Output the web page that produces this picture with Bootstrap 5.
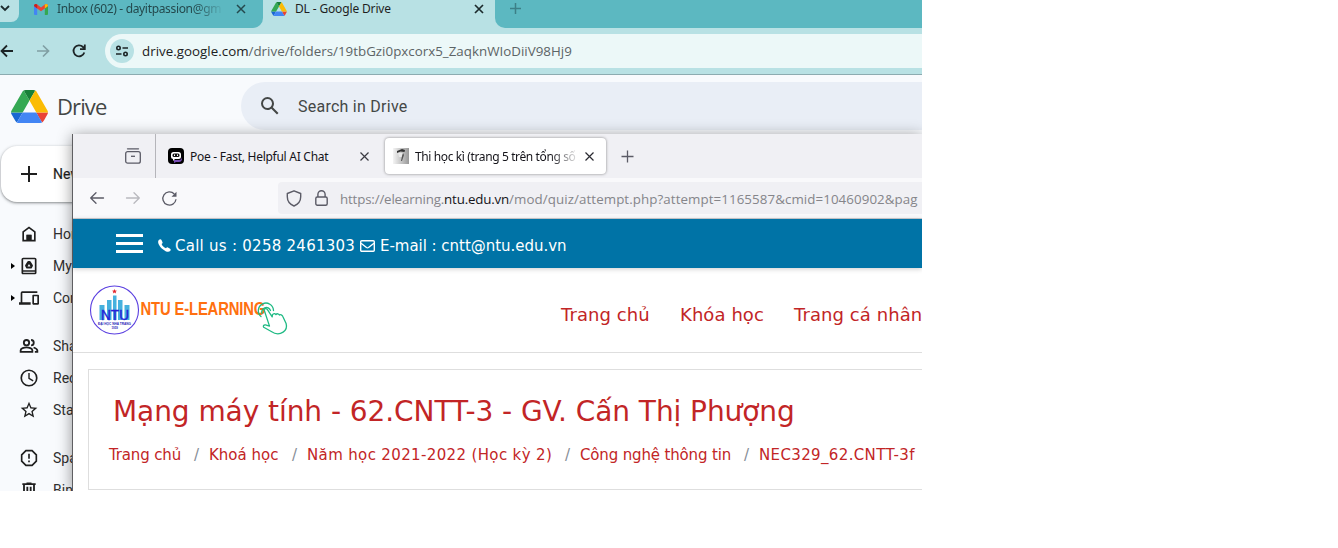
<!DOCTYPE html>
<html lang="vi">
<head>
<meta charset="utf-8">
<meta name="viewport" content="width=device-width, initial-scale=1">
<title>DL - Google Drive</title>
<link href="https://cdn.jsdelivr.net/npm/bootstrap@5.3.0/dist/css/bootstrap.min.css" rel="stylesheet">
<style>
  body { background: #fff; font-family: "Noto Sans", "Open Sans", sans-serif; font-size: 12px; color: #1f1f1f; line-height: 1; }
  svg { display: block; flex: none; overflow: visible; }
  .desktop { width: 922px; height: 491px; background: #f8fafd; }
  .fx { flex: none; white-space: nowrap; }
  .fade-end { overflow: hidden; -webkit-mask-image: linear-gradient(90deg, #000 calc(100% - 30px), transparent); mask-image: linear-gradient(90deg, #000 calc(100% - 30px), transparent); }

  /* outer browser */
  .strip { height: 28px; background: #b8e1e4; font-size: 12px; letter-spacing: -.15px; }
  .strip-left { width: 263px; height: 28px; background: #5cb8c1; border-bottom-right-radius: 10px; }
  .strip-active { width: 232px; height: 18px; }
  .strip-right { height: 28px; background: #5cb8c1; border-bottom-left-radius: 10px; }
  .strip-search { width: 19px; height: 22px; background: #b8e1e4; border-bottom-right-radius: 8px; }
  .strip-line { height: 18px; margin-left: 15px; }
  .mail-title { width: 167px; margin-left: 9px; color: #24494d; line-height: 18px; letter-spacing: -.33px; }
  .bar { height: 47px; background: #b8e1e4; border-bottom: 1px solid #8cabb0; }
  .pill { height: 34px; background: #ecf8f8; border-radius: 17px 0 0 17px; margin-left: 18px; padding-left: 5px; }
  .site-info { width: 24px; height: 24px; background: #b8e1e4; }
  .address { font-size: 13.33px; color: #5c6466; margin-left: 8px; padding-top: 2px; letter-spacing: .02px; font-family: "Open Sans", sans-serif; }
  .address b { font-weight: 400; color: #1b2021; }

  /* drive */
  .drive-head { height: 62px; }
  .drive-name { font: 22px/1 "Open Sans", sans-serif; color: #444746; letter-spacing: -.9px; }
  .drive-search { height: 48px; background: #e9eef6; border-radius: 24px 0 0 24px; padding-left: 17px; color: #444746; font: 16px/1 Roboto, sans-serif; letter-spacing: .25px; }
  .new-btn { width: 110px; height: 56px; border-radius: 16px; margin: 9px 0 16px 1px; padding-left: 18px; background: #fff; font: 14px/1 Roboto, sans-serif; -webkit-text-stroke: .2px; box-shadow: 0 1px 2px rgba(60,64,67,.4), 0 1px 3px 1px rgba(60,64,67,.18); }
  .side-item { height: 32px; font: 14px/1 Roboto, sans-serif; color: #303030; }
  .side-item .tri { width: 19px; padding-left: 11px; }
  .side-gap { height: 16px; }

  /* window lying over the drive page */
  .win { left: 72px; top: 134px; width: 850px; height: 357px; background: #fff; border-left: 1px solid #5f5f62; box-shadow: 0 2px 14px rgba(0,0,0,.42); }
  .win-tabs { height: 44px; background: #f0f0f4; color: #15141a; }
  .win-tab { width: 221px; height: 36px; background: #fff; border-radius: 4px; box-shadow: 0 0 3px rgba(0,0,0,.45); padding-left: 8px; }
  .win-bar { height: 41px; background: #f9f9fb; border-bottom: 1px solid #ccccd0; }
  .win-url { height: 32px; background: #f0f0f4; border-radius: 4px 0 0 4px; color: #85858a; font-size: 13.33px; padding-left: 8px; font-family: "Open Sans", sans-serif; }
  .win-url b { font-weight: 400; color: #15141a; }
  .top-blue { height: 49px; background: #0073a6; color: #fff; font: 15px/1 "DejaVu Sans", sans-serif; box-shadow: 0 1px 5px rgba(0,0,0,.2); padding-left: 43px; }
  .burger { row-gap: 5px; }
  .burger i { display: block; width: 27px; height: 3px; background: #fff; }
  .site-head { height: 85px; border-bottom: 1px solid #dedede; padding-left: 17px; }
  .red { color: #c22526; }
  .main-nav { font: 18px/1 "DejaVu Sans", sans-serif; letter-spacing: .08px; }
  .course { margin: 16px 0 0 15px; height: 121px; border: 1px solid #dedede; border-right: 0; }
  .course h1 { font: 28px/34px "DejaVu Sans", sans-serif; letter-spacing: -.065px; margin: 25px 0 0 24px; white-space: nowrap; }
  .crumbs { font: 15px/20px "DejaVu Sans", sans-serif; margin: 16px 0 0 20px; height: 20px; }
  .crumbs .sl { color: #868e96; }
  .wider { letter-spacing: .36px; }
  .tighter { letter-spacing: -.15px; }
</style>
</head>
<body>
<div class="desktop position-relative overflow-hidden">

  <div class="strip d-flex">
    <div class="strip-left fx d-flex align-items-start">
      <div class="strip-search fx"><svg width="19" height="18" viewBox="0 0 19 18" fill="none" stroke="#1c2a2c" stroke-width="1.8"><path d="M1 6l4 4 4-4"/></svg></div>
      <div class="strip-line fx d-flex align-items-center">
        <svg width="14" height="11" viewBox="0 0 14 11"><path fill="#4285f4" d="M0 2h3.2v9H1a1 1 0 0 1-1-1z"/><path fill="#34a853" d="M10.8 2H14v8a1 1 0 0 1-1 1h-2.200z"/><path fill="#ea4335" d="M0 2C0 0 2-.6 3.200.5L7 3.500 10.800.5C12-.6 14 0 14 2l-3.200 2.500L7 7.300 3.200 4.500z"/><path fill="#c5221f" d="M0 2C0 0 2-.6 3.200.5v4z"/><path fill="#fbbc04" d="M14 2c0-2-2-2.600-3.200-1.500v4z"/></svg>
        <span class="fx fade-end mail-title">Inbox (602) - dayitpassion@gm</span>
        <svg width="8" height="8" viewBox="0 0 8 8" stroke="#24494d" stroke-width="1.500" style="margin-left:13px"><path d="M0 0l8 8M8 0L0 8"/></svg>
      </div>
    </div>
    <div class="strip-active fx d-flex align-items-center">
      <svg width="16" height="14" viewBox="0 0 87.300 78" style="margin-left:8px"><use href="#drive"/></svg>
      <span class="fx" style="width:180px;margin-left:8px;line-height:18px">DL - Google Drive</span>
      <svg width="8" height="8" viewBox="0 0 8 8" stroke="#1c2a2c" stroke-width="1.700"><path d="M0 0l8 8M8 0L0 8"/></svg>
    </div>
    <div class="strip-right flex-grow-1"><svg width="11" height="11" viewBox="0 0 11 11" stroke="#3c7f87" stroke-width="1.500" style="margin:3px 0 0 15px"><path d="M5.500 0v11M0 5.500h11"/></svg></div>
  </div>

  <div class="bar d-flex align-items-center">
    <svg width="14" height="14" viewBox="0 0 14 14" fill="none" stroke="#1c2426" stroke-width="1.800"><path d="M13 7H2M7 1.500L1.500 7 7 12.500"/></svg>
    <svg width="14" height="14" viewBox="0 0 14 14" fill="none" stroke="#809fa3" stroke-width="1.700" style="margin-left:22px"><path d="M1 7h11M7 1.500L12.500 7 7 12.500"/></svg>
    <svg width="14" height="14" viewBox="0 0 14 14" fill="none" stroke="#1c2426" stroke-width="1.800" style="margin-left:22px"><path d="M12.300 8.500A5.500 5.500 0 1 1 11 3l1.500 1.500"/><path d="M12.800.5v4.700H8"/></svg>
    <div class="pill flex-grow-1 d-flex align-items-center" style="margin-left:19px">
      <div class="site-info fx rounded-circle d-flex align-items-center justify-content-center">
        <svg width="12" height="12" viewBox="0 0 12 12" fill="none" stroke="#1c2426" stroke-width="1.600"><circle cx="2.500" cy="3" r="1.700"/><path d="M6.500 3H12M0 9h5.500"/><circle cx="9.500" cy="9" r="1.700"/></svg>
      </div>
      <span class="address fx"><b>drive.google.com</b>/drive/folders/19tbGzi0pxcorx5_ZaqknWIoDiiV98Hj9</span>
    </div>
  </div>

  <div class="drive-head d-flex align-items-center">
    <svg width="37" height="33" viewBox="0 0 87.300 78" style="margin-left:10.500px">
      <g id="drive"><path d="m6.600 66.850 3.850 6.650c.8 1.400 1.950 2.500 3.300 3.300l13.750-23.800h-27.500c0 1.550.4 3.100 1.200 4.500z" fill="#1967d2"/><path d="m43.650 25-13.750-23.800c-1.350.8-2.500 1.900-3.300 3.300l-25.400 44a9 9 0 0 0-1.200 4.500h27.500z" fill="#34a853"/><path d="m73.550 76.800c1.350-.8 2.500-1.900 3.300-3.300l1.600-2.750 7.650-13.250c.8-1.400 1.200-2.950 1.200-4.500h-27.500l5.850 11.500z" fill="#ea4335"/><path d="m43.650 25 13.750-23.800c-1.350-.8-2.900-1.200-4.500-1.200h-18.500c-1.600 0-3.150.45-4.500 1.200z" fill="#188038"/><path d="m59.800 53h-32.300l-13.750 23.800c1.350.8 2.900 1.200 4.500 1.200h50.800c1.600 0 3.150-.45 4.500-1.200z" fill="#4285f4"/><path d="m73.400 26.500-12.700-22c-.8-1.400-1.950-2.500-3.300-3.300l-13.750 23.800 16.150 28h27.450c0-1.550-.4-3.100-1.200-4.500z" fill="#fbbc04"/></g>
    </svg>
    <span class="drive-name fx" style="width:184px;margin-left:9.500px">Drive</span>
    <div class="drive-search flex-grow-1 d-flex align-items-center">
      <svg width="24" height="24" viewBox="0 0 24 24" fill="#444746"><path d="M20.490 19l-5.730-5.730C15.530 12.200 16 10.910 16 9.500A6.500 6.500 0 1 0 9.500 16c1.410 0 2.700-.47 3.770-1.240L19 20.490 20.490 19zM5 9.500C5 7.010 7.010 5 9.500 5S14 7.010 14 9.500 11.990 14 9.500 14 5 11.990 5 9.500z"/></svg>
      <span class="fx" style="margin-left:16px;padding-top:1px">Search in Drive</span>
    </div>
  </div>

  <div class="new-btn d-flex align-items-center">
    <svg width="20" height="20" viewBox="0 0 20 20" stroke="#1f1f1f" stroke-width="2"><path d="M10 2v16M2 10h16"/></svg>
    <span style="margin-left:14px">New</span>
  </div>
  <div class="side-item d-flex align-items-center"><span class="tri fx"></span>
    <svg width="20" height="20" viewBox="0 0 24 24" fill="#1f1f1f"><path d="M12 3L4 9v12h16V9l-8-6zm6 16h-3v-6H9v6H6v-9l6-4.500 6 4.500v9z"/><path d="M9 13h6v6H9z"/></svg><span style="margin-left:14px">Home</span></div>
  <div class="side-item d-flex align-items-center"><span class="tri fx"><svg width="4" height="6"><path d="M0 0l4 3-4 3z"/></svg></span>
    <svg width="20" height="20" viewBox="0 0 24 24" fill="#1f1f1f"><path d="M19 2H5a2 2 0 0 0-2 2v16c0 1.100.9 2 2 2h14a2 2 0 0 0 2-2V4a2 2 0 0 0-2-2zm0 18H5v-1h14v1zm0-3H5V4h14v13zm-9.200-2h4.400c.5 0 1-.3 1.200-.7l1.100-2c.3-.4.3-1 0-1.400L13.900 6.700A1.400 1.400 0 0 0 12.700 6h-1.400c-.5 0-1 .3-1.200.7L7.500 10.900c-.3.400-.3 1 0 1.400l1.100 2c.2.400.7.700 1.200.7zm.4-2.300L12 9.500l1.800 3.200z"/></svg><span style="margin-left:14px">My Drive</span></div>
  <div class="side-item d-flex align-items-center"><span class="tri fx"><svg width="4" height="6"><path d="M0 0l4 3-4 3z"/></svg></span>
    <svg width="20" height="20" viewBox="0 0 24 24" fill="#1f1f1f"><path d="M4 6h18V4H4a2 2 0 0 0-2 2v11H0v3h14v-3H4V6zm19 2h-6a1 1 0 0 0-1 1v10c0 .55.45 1 1 1h6c.55 0 1-.45 1-1V9c0-.55-.45-1-1-1zm-1 10h-4v-8h4v8z"/></svg><span style="margin-left:14px">Computers</span></div>
  <div class="side-gap"></div>
  <div class="side-item d-flex align-items-center"><span class="tri fx"></span>
    <svg width="20" height="20" viewBox="0 0 24 24" fill="none" stroke="#1f1f1f" stroke-width="2.200"><circle cx="9" cy="8" r="3.200"/><path d="M2 19v-2c0-2 4-3.300 7-3.300s7 1.300 7 3.300v2zM14.500 4.800a3.200 3.200 0 0 1 0 6.400M17.500 13.800c2.500.8 4.500 1.700 4.500 3.700V19h-3"/></svg><span style="margin-left:14px">Shared with me</span></div>
  <div class="side-item d-flex align-items-center"><span class="tri fx"></span>
    <svg width="20" height="20" viewBox="0 0 24 24" fill="none" stroke="#1f1f1f" stroke-width="2"><circle cx="12" cy="12" r="9.300"/><path d="M12 6v6.500l5 3" stroke-width="1.700"/></svg><span style="margin-left:14px">Recent</span></div>
  <div class="side-item d-flex align-items-center"><span class="tri fx"></span>
    <svg width="20" height="20" viewBox="0 0 24 24" fill="#1f1f1f"><path d="M22 9.240l-7.190-.62L12 2 9.190 8.630 2 9.240l5.460 4.730L5.820 21 12 17.270 18.180 21l-1.630-7.030L22 9.240zM12 15.400l-3.760 2.270 1-4.280-3.320-2.880 4.380-.38L12 6.100l1.710 4.040 4.380.38-3.320 2.880 1 4.280L12 15.400z"/></svg><span style="margin-left:14px">Starred</span></div>
  <div class="side-gap"></div>
  <div class="side-item d-flex align-items-center"><span class="tri fx"></span>
    <svg width="20" height="20" viewBox="0 0 24 24" fill="none" stroke="#1f1f1f" stroke-width="2"><path d="M8.300 3.200h7.400l5.100 5.100v7.400l-5.100 5.100H8.300l-5.100-5.100V8.300z"/><path d="M12 7v6M12 15v2"/></svg><span style="margin-left:14px">Spam</span></div>
  <div class="side-item d-flex align-items-center"><span class="tri fx"></span>
    <svg width="20" height="20" viewBox="0 0 24 24" fill="none" stroke="#1f1f1f" stroke-width="2.200"><path d="M4 5h16M9 4h6M6 5v15h12V5M10 8v9M14 8v9"/></svg><span style="margin-left:14px">Bin</span></div>

  <div class="win position-absolute">
    <div class="win-tabs d-flex align-items-center">
      <svg width="16" height="16" viewBox="0 0 16 16" fill="none" stroke="#5b5b66" stroke-width="1.300" style="margin-left:52px"><path d="M2.500.8h11" stroke-linecap="round"/><rect x=".7" y="3.700" width="14.600" height="11.500" rx="2"/><path d="M6 8.300h4"/></svg>
      <div class="fx h-100 border-start" style="margin-left:14px;--bs-border-color:#b5b5ba"></div>
      <svg width="16" height="16" viewBox="0 0 16 16" style="margin-left:12px"><rect width="16" height="16" rx="4" fill="#000"/><path d="M6 12h5c2 0 3-1.500 3-3.500V11c0 2-1.500 3-3 3H8l-2 1z" fill="#7a4fb5"/><rect x="3" y="4" width="10" height="7" rx="2.500" fill="#fff"/><path d="M5 10h3l-3 3z" fill="#fff"/><rect x="4.500" y="5.500" width="7" height="3.500" rx="1.500" fill="#111"/><path d="M6.500 6.500v1.500M9.500 6.500v1.500" stroke="#fff"/></svg>
      <span class="fx" style="width:170px;margin-left:6px;line-height:18px;padding-top:1px;letter-spacing:-.27px">Poe - Fast, Helpful AI Chat</span>
      <svg width="9" height="9" viewBox="0 0 9 9" stroke="#3b3b42" stroke-width="1.200"><path d="M.5.5l8 8M8.500.5l-8 8"/></svg>
      <div class="win-tab fx d-flex align-items-center" style="margin-left:16px">
        <svg width="16" height="16" viewBox="0 0 16 16"><defs><linearGradient id="gr"><stop stop-color="#f4f4f4"/><stop offset="1" stop-color="#999"/></linearGradient></defs><rect width="16" height="16" fill="url(#gr)"/><path d="M4 3l5-2 3 1-.5 2-4-.5L4 5z" fill="#333"/><path d="M5 5h5l-1 4H6z" fill="#e8e8e8"/><path d="M10 5l1 2-2 6H8l1-5z" fill="#555"/></svg>
        <span class="fx fade-end" style="width:165px;margin-left:6px;line-height:20px;padding-top:1px;letter-spacing:-.38px">Thi học kì (trang 5 trên tổng số 3</span>
        <svg width="9" height="9" viewBox="0 0 9 9" stroke="#2b2b32" stroke-width="1.200" style="margin-left:5px"><path d="M.5.500l8 8M8.500.5l-8 8"/></svg>
      </div>
      <svg width="13" height="13" viewBox="0 0 13 13" stroke="#5b5b66" stroke-width="1.300" style="margin-left:15px"><path d="M6.500.5v12M.5 6.500h12"/></svg>
    </div>

    <div class="win-bar d-flex align-items-center">
      <svg width="14" height="12" viewBox="0 0 14 12" fill="none" stroke="#5b5b66" stroke-width="1.300" style="margin-left:17px" stroke-linecap="round" stroke-linejoin="round"><path d="M13.500 6H.7M6 .7L.7 6 6 11.300"/></svg>
      <svg width="14" height="12" viewBox="0 0 14 12" fill="none" stroke="#b9b9be" stroke-width="1.300" style="margin-left:22px" stroke-linecap="round" stroke-linejoin="round"><path d="M.5 6h12.800M8 .7L13.300 6 8 11.300"/></svg>
      <svg width="15" height="15" viewBox="0 0 15 15" fill="none" stroke="#5b5b66" stroke-width="1.300" style="margin-left:22px"><path d="M14 8.200A6.600 6.600 0 1 1 12.300 3"/><path d="M14.500.7v5H9.500z" fill="#5b5b66" stroke="none"/></svg>
      <div class="win-url flex-grow-1 d-flex align-items-center" style="margin-left:101px">
        <svg width="16" height="17" viewBox="0 0 16 17" fill="none" stroke="#5b5b66" stroke-width="1.400" stroke-linejoin="round"><path d="M8 .8l6.700 2.700v3.200C14.700 11 12 14.300 8 16 4 14.300 1.300 11 1.300 6.700V3.500z"/></svg>
        <svg width="13" height="16" viewBox="0 0 13 16" fill="none" stroke="#5b5b66" stroke-width="1.400" style="margin-left:13px"><rect x=".8" y="7" width="11.400" height="8.200" rx="1.500"/><path d="M2.900 7V4.300a3.600 3.600 0 0 1 7.200 0V7"/></svg>
        <span class="fx" style="margin-left:12px;padding-top:3px"><span style="letter-spacing:-.17px">https://elearning.<b>ntu.edu.vn</b></span><span style="letter-spacing:.08px">/mod/quiz/attempt.php?attempt=1165587&amp;cmid=10460902&amp;pag</span></span>
      </div>
    </div>

    <div class="top-blue d-flex align-items-center position-relative">
      <div class="burger d-grid fx"><i></i><i></i><i></i></div>
      <svg width="13" height="13" viewBox="0 0 13 13" fill="#fff" style="margin:4px 0 0 15px"><path d="M1 .8C2 0 3 0 3.500 1l1 2.200c.3.700 0 1.200-.9 1.800.8 2 2.300 3.400 4.400 4.300.7-1 1.200-1.200 1.900-.8l2.200 1.200c.9.600.8 1.400 0 2.300-1.300 1.500-4.200 1-7.300-1.700C1.300 7.500-1.300 3 1 .8z"/></svg>
      <span class="fx" style="width:185px;margin-left:4px;padding-top:5px;letter-spacing:.26px">Call us : 0258 2461303</span>
      <svg width="15" height="12" viewBox="0 0 15 12" fill="none" stroke="#fff" stroke-width="1.400" style="margin-top:4px"><rect x=".7" y=".7" width="13.600" height="10.600" rx="1"/><path d="M1 3.200l5.500 4.300q1 .7 2 0L14 3.200"/></svg>
      <span class="fx" style="margin-left:5px;padding-top:5px;letter-spacing:-.03px">E-mail : cntt@ntu.edu.vn</span>
    </div>

    <div class="site-head d-flex align-items-center">
      <svg width="200" height="52" viewBox="0 0 200 52">
        <circle cx="24.500" cy="26" r="24" fill="#fff" stroke="#5a3fe0" stroke-width="1.100"/>
        <path fill="#46b1de" d="M9.500 21h5v15h-5zM17 16h4.500v20H17zM23 11.500h3.500V36H23zM28 16h4.500v20H28zM34.500 21h5v15h-5z"/>
        <path fill="#e3262c" d="M24.500 5l.7 1.600 1.800.1-1.400 1.100.5 1.700-1.600-1-1.600 1 .5-1.700L22 6.700l1.800-.1z"/>
        <text x="11" y="35.500" font-family="Liberation Sans" font-size="15" textLength="28" fill="#2621d8" stroke="#2621d8" stroke-width=".4" lengthAdjust="spacingAndGlyphs">NTU</text>
        <text x="8" y="40.500" font-family="Liberation Sans" font-weight="700" font-size="3.600" textLength="33" lengthAdjust="spacingAndGlyphs" fill="#2a25b8">ĐẠI HỌC NHA TRANG</text>
        <text x="21.500" y="45" font-family="Liberation Sans" font-weight="700" font-size="3.200" textLength="6.500" lengthAdjust="spacingAndGlyphs" fill="#2a25b8">1959</text>
        <text transform="translate(50.500 31.300) scale(.78 1)" font-family="Liberation Sans" font-weight="700" font-size="19" textLength="160" lengthAdjust="spacing" fill="#ff7010">NTU E-LEARNING</text>
        <g fill="none" stroke="#1fba84" stroke-width="1.300" stroke-linejoin="round" stroke-linecap="round"><path fill="#fff" d="M174 25.500c1-1.500 2.800-1.200 3.600.4l4.600 7 .2-2c1-1.600 2.700-1.500 3.500-.3 1-1.300 2.800-1 3.500.5 1.200-.9 2.700-.4 3.300 1.200l3.400 7.200c.9 3.200-.2 6.800-3 8.600-4.200 2.800-8 2-11.800-.6l-7.600-4.200c-.9-1.300.1-2.700 1.800-2.400l4 1.200z"/><path d="M172 29.500a4.500 4.500 0 1 1 8.500-3M171 32.500a7.600 7.600 0 1 1 12.500-6"/></g>
      </svg>
      <div class="main-nav red d-flex fx" style="margin-left:271px;padding-top:10px"><span class="fx" style="width:119px">Trang chủ</span><span class="fx" style="width:114px">Khóa học</span><span class="fx">Trang cá nhân</span></div>
    </div>

    <div class="course">
      <h1 class="red">Mạng máy tính - 62.CNTT-3 - GV. Cấn Thị Phượng</h1>
      <div class="crumbs red d-flex">
        <span class="fx tighter" style="width:85px">Trang chủ</span><span class="fx sl" style="width:15px">/</span>
        <span class="fx" style="width:83px">Khoá học</span><span class="fx sl" style="width:15px">/</span>
        <span class="fx wider" style="width:258px">Năm học 2021-2022 (Học kỳ 2)</span><span class="fx sl" style="width:15px">/</span>
        <span class="fx tighter" style="width:164px">Công nghệ thông tin</span><span class="fx sl" style="width:15px">/</span>
        <span class="fx wider">NEC329_62.CNTT-3f</span>
      </div>
    </div>
  </div>
</div>
<script src="https://cdn.jsdelivr.net/npm/bootstrap@5.3.0/dist/js/bootstrap.bundle.min.js"></script>
</body>
</html>
